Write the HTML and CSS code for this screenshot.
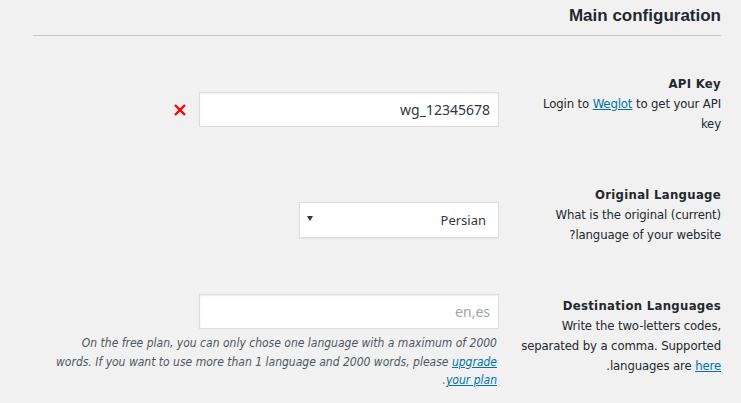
FILE: index.html
```html
<!DOCTYPE html>
<html lang="en" dir="rtl">
<head>
<meta charset="utf-8">
<title>Main configuration</title>
<link rel="stylesheet" href="styles.css">
</head>
<body>
<div class="wrap">
  <h2 class="title">Main configuration</h2>
  <hr class="rule">
  <div class="rows">
    <div class="row">
      <div class="label">
        <div class="label-title">API Key</div>
        <p class="label-desc">Login to <a href="#">Weglot</a> to get your API key</p>
      </div>
      <div class="field field-api">
        <input class="text-input" type="text" value="wg_12345678">
        <span class="err" aria-label="invalid">
          <svg width="14" height="14" viewBox="0 0 14 14"><path d="M2 2 L12 12 M12 2 L2 12" stroke="#ff0000" stroke-width="2.4" stroke-linecap="butt" fill="none"/></svg>
        </span>
      </div>
    </div>
    <div class="row">
      <div class="label">
        <div class="label-title">Original Language</div>
        <p class="label-desc">What is the original (current) language of your website?</p>
      </div>
      <div class="field field-lang">
        <div class="select">
          <span class="select-value">Persian</span>
          <span class="select-arrow"></span>
        </div>
      </div>
    </div>
    <div class="row">
      <div class="label">
        <div class="label-title">Destination Languages</div>
        <p class="label-desc">Write the two-letters codes, separated by a comma. Supported languages are <a href="#">here</a>.</p>
      </div>
      <div class="field field-dest">
        <input class="text-input" type="text" placeholder="en,es">
        <p class="note">On the free plan, you can only chose one language with a maximum of 2000 words. If you want to use more than 1 language and 2000 words, please <a href="#">upgrade your plan</a>.</p>
      </div>
    </div>
  </div>
</div>
</body>
</html>
```
FILE: styles.css
```css
* { box-sizing: border-box; }
html, body {
  margin: 0;
  background: #f1f1f1;
}
body {
  color: #23282d;
  font-family: "DejaVu Sans", sans-serif;
  font-stretch: condensed;
  font-size: 13px;
  line-height: 20px;
}
.wrap {
  padding: 5px 20px 0 33px;
}
.title {
  margin: 0;
  font-family: "Liberation Sans", Arial, sans-serif;
  font-stretch: normal;
  font-size: 17px;
  line-height: 22px;
  font-weight: bold;
  color: #23282d;
}
.rule {
  margin: 8px 0 0 0;
  border: 0;
  border-top: 1px solid #c8c8c8;
  height: 0;
}
.rows {
  display: flex;
  flex-direction: column;
  gap: 49px;
  padding-top: 36px;
}
.row {
  display: grid;
  grid-template-columns: 200px 1fr;
  column-gap: 22px;
  align-items: start;
}
.label {
  padding-top: 2px;
}
.label-title {
  font-weight: bold;
  letter-spacing: 0.3px;
}
.label-desc {
  margin: 0;
  letter-spacing: -0.12px;
}
a {
  color: #0073aa;
  text-decoration: underline;
}
.field {
  display: flex;
  flex-direction: column;
  align-items: flex-start;
}
.field-api {
  flex-direction: row;
  align-items: center;
  gap: 12px;
  padding-top: 20px;
}
.field-lang {
  padding-top: 19px;
}
.text-input {
  width: 300px;
  height: 35px;
  margin: 0;
  padding: 0 8px;
  border: 1px solid #ddd;
  background: #fff;
  box-shadow: inset 0 1px 2px rgba(0,0,0,.07);
  font-family: "Noto Sans", sans-serif;
  font-size: 14px;
  color: #32373c;
  direction: ltr;
  text-align: right;
  outline: none;
}
.text-input::placeholder {
  color: #a0a5aa;
}
.err {
  display: flex;
  width: 14px;
  height: 14px;
}
.select {
  width: 200px;
  height: 36px;
  border: 1px solid #ddd;
  background: #fff;
  box-shadow: 0 1px 1px rgba(0,0,0,.04);
  display: flex;
  align-items: center;
  justify-content: space-between;
  padding: 0 12px 0 7px;
}
.select-value {
  font-family: "Noto Sans", sans-serif;
  font-stretch: normal;
  font-size: 13px;
  color: #32373c;
}
.select-arrow {
  width: 0;
  height: 0;
  border-left: 3px solid transparent;
  border-right: 3px solid transparent;
  border-top: 5px solid #32373c;
  margin-top: -4px;
}
.note {
  margin: 5px 2px 0 0;
  width: 448px;
  font-size: 12px;
  font-style: italic;
  line-height: 18.5px;
  color: #50575e;
}
```
